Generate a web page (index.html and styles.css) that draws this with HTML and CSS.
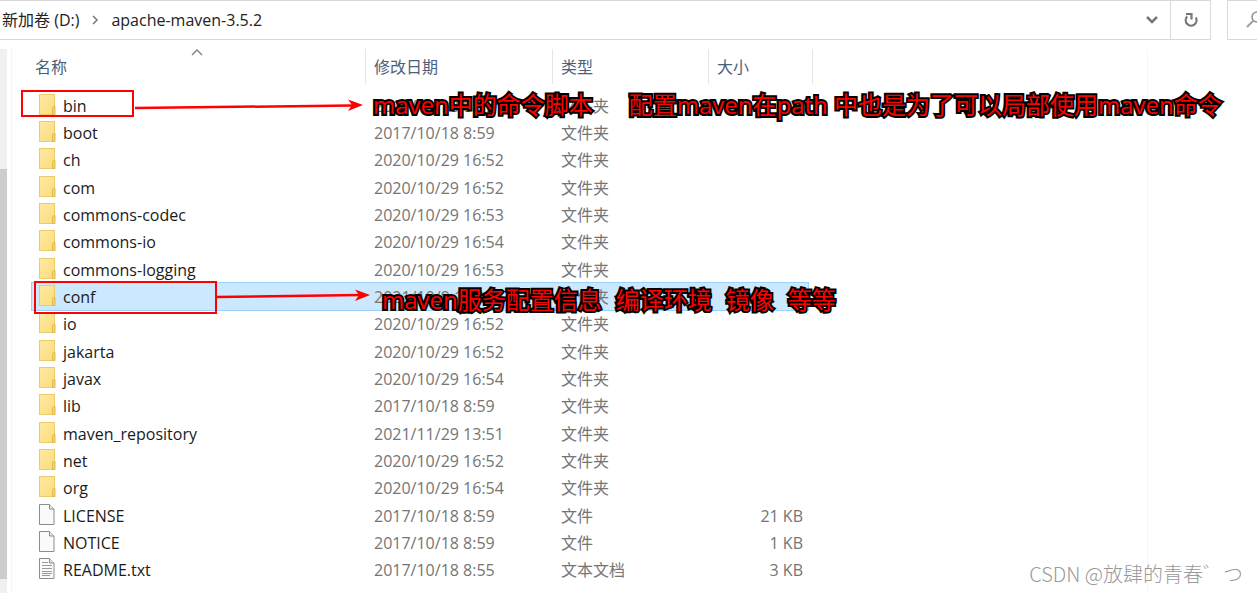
FILE: index.html
```html
<!DOCTYPE html>
<html lang="zh-CN">

<head>
  <meta charset="UTF-8" />
  <meta name="viewport" content="width=device-width, initial-scale=1.0" />
  <title>apache-maven-3.5.2</title>
  <link rel="stylesheet" href="styles.css">
</head>

<body>
  <!-- icons used by the rows -->
  <svg class="defs" width="0" height="0">
    <defs>
      <linearGradient id="folderFill" x1="0" y1="0" x2="1" y2="1">
        <stop offset="0" stop-color="#ffeaa3" />
        <stop offset="1" stop-color="#fbdc7c" />
      </linearGradient>
    </defs>
    <symbol id="folder" viewBox="0 0 18 22">
      <rect x="1.500" y=".5" width="15" height="20" fill="url(#folderFill)" stroke="#ebcb6c" />
      <path d="M14.500 20.500v-6.500l1-1.500h1.500v8z" fill="#f8d366" stroke="#e3b94c" />
    </symbol>
    <symbol id="file" viewBox="0 0 18 22">
      <path d="M1.500.500h10l4.500 4.500v15.500H1.500z" fill="#f9fafb" stroke="#8c8c8c" />
      <path d="M11.500 .5v4.500h4.500" fill="#e6e6e6" stroke="#8c8c8c" />
    </symbol>
    <symbol id="text" viewBox="0 0 18 22">
      <path d="M1.500.500h10l4.500 4.500v15.500H1.500z" fill="#f9fafb" stroke="#8c8c8c" />
      <path d="M11.500 .5v4.500h4.500" fill="#e6e6e6" stroke="#8c8c8c" />
      <path d="M4 4.500h6M4 7.500h10M4 10.500h10M4 13.500h10M4 15.500h10M4 17.500h8" stroke="#9a9a9a" />
    </symbol>
  </svg>

  <div class="toolbar">
    <nav class="address">
      <a href="#">新加卷 (D:)</a>
      <svg width="8" height="10" viewBox="0 0 8 10"><path d="M2 1l4 4-4 4" fill="none" stroke="#777" stroke-width="1.500" /></svg>
      <a href="#">apache-maven-3.5.2</a>
      <button class="history" aria-label="历史记录">
        <svg width="12" height="10" viewBox="0 0 12 10"><path d="M1 2l5 5 5-5" fill="none" stroke="#777" stroke-width="2.500" /></svg>
      </button>
      <button class="refresh" aria-label="刷新">
        <svg width="14" height="16" viewBox="0 0 14 16">
          <path d="M3.200 4.500A5.400 5.400 0 1 0 11.800 5.500" fill="none" stroke="#777" stroke-width="2.200" />
          <path d="M2 2h5.500v5.500" fill="none" stroke="#777" stroke-width="2.200" />
        </svg>
      </button>
    </nav>
    <div class="search">
      <svg width="18" height="18" viewBox="0 0 18 18"><circle cx="11" cy="6" r="5" fill="none" stroke="#8a90a8" stroke-width="1.500" /><path d="M7.500 9.500L1 16" stroke="#a99a98" stroke-width="2" /></svg>
      <input type="search" aria-label="搜索">
    </div>
  </div>

  <main class="explorer">
    <div class="scrollbar"><div class="thumb"></div></div>
    <section class="list">
      <table>
        <thead>
          <tr>
            <th class="name">名称<svg class="sort" width="12" height="7" viewBox="0 0 12 7"><path d="M1 6l5-5 5 5" fill="none" stroke="#888" stroke-width="1.500" /></svg></th>
            <th class="date">修改日期</th>
            <th class="type">类型</th>
            <th class="size">大小</th>
          </tr>
        </thead>
        <tbody id="rows"></tbody>
      </table>
    </section>
    <aside class="preview"></aside>
  </main>

  <!-- notes drawn over the list -->
  <svg class="marks" width="400" height="330" viewBox="0 0 400 330">
    <g fill="none" stroke="#f00" stroke-width="2">
      <rect x="22" y="91" width="111" height="25" />
      <rect x="35" y="282" width="181" height="31" />
      <path d="M135 108L352 105.500M217 297L360 295" stroke-width="2.500" />
    </g>
    <path d="M363 105l-15-5.500 4 5.500-4 6zM370 295l-15-5.500 4 5.500-4 6z" fill="#f00" />
  </svg>
  <p class="note note-bin"><span>maven中的命令脚本</span><span>配置maven在path 中也是为了可以局部使用maven命令</span></p>
  <p class="note note-conf"><span>maven服务配置信息</span><span>编译环境</span><span>镜像</span><span>等等</span></p>
  <p class="watermark">CSDN @放肆的青春゛つ</p>

  <script>
    const files = [
      ["folder", "bin", "2017/10/18 8:59", "文件夹", ""],
      ["folder", "boot", "2017/10/18 8:59", "文件夹", ""],
      ["folder", "ch", "2020/10/29 16:52", "文件夹", ""],
      ["folder", "com", "2020/10/29 16:52", "文件夹", ""],
      ["folder", "commons-codec", "2020/10/29 16:53", "文件夹", ""],
      ["folder", "commons-io", "2020/10/29 16:54", "文件夹", ""],
      ["folder", "commons-logging", "2020/10/29 16:53", "文件夹", ""],
      ["folder", "conf", "2021/10/9 17:12", "文件夹", ""],
      ["folder", "io", "2020/10/29 16:52", "文件夹", ""],
      ["folder", "jakarta", "2020/10/29 16:52", "文件夹", ""],
      ["folder", "javax", "2020/10/29 16:54", "文件夹", ""],
      ["folder", "lib", "2017/10/18 8:59", "文件夹", ""],
      ["folder", "maven_repository", "2021/11/29 13:51", "文件夹", ""],
      ["folder", "net", "2020/10/29 16:52", "文件夹", ""],
      ["folder", "org", "2020/10/29 16:54", "文件夹", ""],
      ["file", "LICENSE", "2017/10/18 8:59", "文件", "21 KB"],
      ["file", "NOTICE", "2017/10/18 8:59", "文件", "1 KB"],
      ["text", "README.txt", "2017/10/18 8:55", "文本文档", "3 KB"]
    ];

    document.getElementById("rows").innerHTML = files.map(([icon, name, date, type, size]) => `
      <tr class="${name === "conf" ? "selected" : ""}">
        <td class="name"><svg width="18" height="22"><use href="#${icon}" /></svg>${name}</td>
        <td>${date}</td>
        <td>${type}</td>
        <td class="size">${size}</td>
      </tr>`).join("");
  </script>
</body>

</html>
```
FILE: styles.css
```css
* {
  box-sizing: border-box;
}

body {
  margin: 0;
  min-height: 100vh;
  display: flex;
  flex-direction: column;
  position: relative;
  background-color: #fff;
  color: #222;
  font-family: "Open Sans", "Noto Sans CJK SC", sans-serif;
  font-size: 16px;
  line-height: 24px;
}

.defs {
  position: absolute;
}

/* address bar */
.toolbar {
  display: flex;
  gap: 16px;
  height: 40px;
}

.address {
  flex: 1;
  display: flex;
  align-items: center;
  gap: 12px;
  padding-left: 2px;
  border: 1px solid #d9d9d9;
  border-left: none;
}

.address a {
  color: #222;
  text-decoration: none;
}

button {
  height: 38px;
  padding: 0;
  border: none;
  background: none;
}

.history {
  width: 36px;
  margin-left: auto;
}

.refresh {
  width: 40px;
  margin-left: -12px;
  border-left: 1px solid #d9d9d9;
}

.address svg,
.search svg {
  display: block;
  flex: none;
  margin: 0 auto;
}

.address > svg {
  margin: 0;
}

.search {
  display: flex;
  align-items: center;
  flex: none;
  width: 30px;
  padding-left: 18px;
  overflow: hidden;
  border: 1px solid #d9d9d9;
  border-right: none;
}

.search input {
  flex: 1;
  width: 0;
  min-width: 0;
  padding: 0;
  border: none;
  outline: none;
}

/* file list */
.explorer {
  flex: 1;
  display: flex;
  margin-top: 9px;
}

.scrollbar {
  width: 7px;
  margin-right: 4px;
  padding: 120px 0 14px;
  background-color: #f0f0f0;
}

.thumb {
  height: 100%;
  background-color: #cdcdcd;
}

.list {
  flex: 1;
  padding-left: 20px;
  border-left: 1px solid #f5f5f5;
  border-right: 1px solid #f7f7f7;
}

.preview {
  width: 109px;
}

table {
  width: 776px;
  table-layout: fixed;
  border-collapse: collapse;
}

th {
  position: relative;
  height: 43px;
  padding: 6px 8px 0;
  color: #4c607a;
  font-weight: normal;
  text-align: left;
  vertical-align: top;
}

th::after {
  content: "";
  position: absolute;
  top: 0;
  right: 0;
  width: 1px;
  height: 35px;
  background-color: #e5e5e5;
}

th.size::after {
  right: -5px;
}

th.name {
  width: 334px;
  padding-left: 3px;
}

th.date {
  width: 187px;
}

th.type {
  width: 156px;
}

.sort {
  position: absolute;
  top: 0;
  left: 159px;
}

td {
  height: 27px;
  padding: 0 8px;
  color: #757575;
  white-space: nowrap;
}

tr:nth-child(3n) td {
  height: 28px;
}

td.name {
  padding-left: 6px;
  color: #1b1b1b;
}

td.name svg {
  margin-right: 7px;
  vertical-align: top;
}

td.size {
  padding-right: 5px;
  text-align: right;
}

.selected {
  background-color: #cce8ff;
  outline: 1px solid #99d1ff;
}

/* notes */
.marks {
  position: absolute;
  top: 0;
  left: 0;
}

.note {
  position: absolute;
  display: flex;
  margin: 0;
  color: #f00;
  font-size: 24px;
  line-height: 32px;
  white-space: nowrap;
  -webkit-text-stroke: 4px #000;
  paint-order: stroke fill;
}

.note-bin {
  top: 89px;
  left: 373px;
  gap: 36px;
}

.note-conf {
  top: 284px;
  left: 382px;
  gap: 14px;
}

.watermark {
  position: absolute;
  right: 14px;
  bottom: 7px;
  margin: 0;
  color: #999;
  font-family: "Noto Sans CJK SC", sans-serif;
  font-size: 20px;
  font-weight: 300;
}
```
